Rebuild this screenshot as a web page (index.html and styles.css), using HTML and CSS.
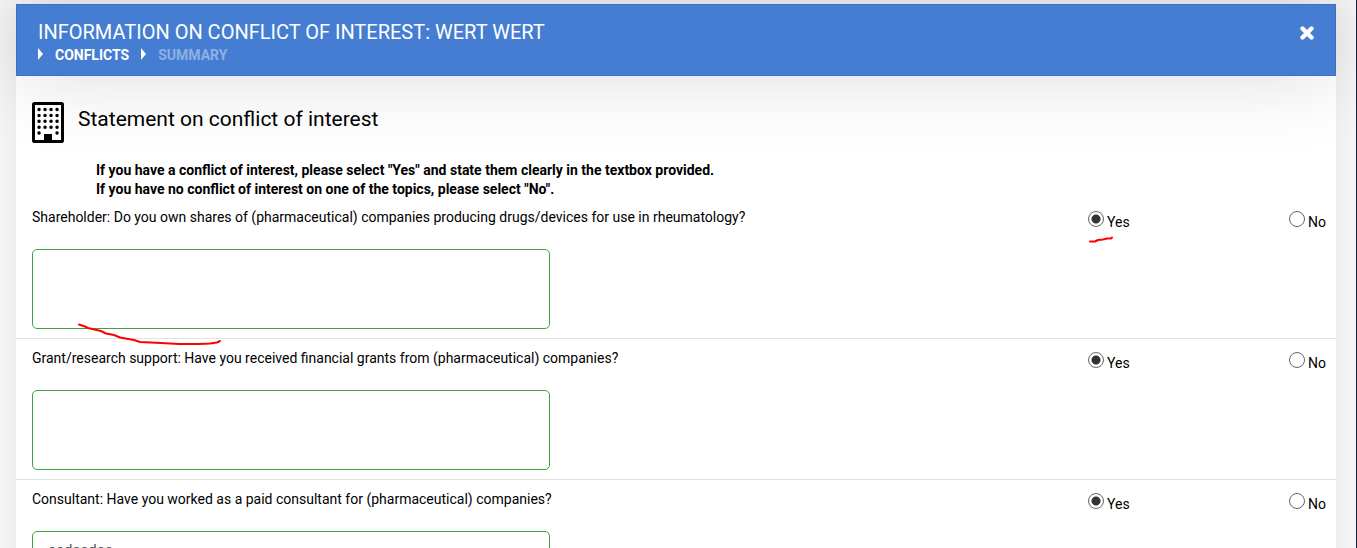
FILE: index.html
```html
<!DOCTYPE html>
<html lang="en">
<head>
    <meta charset="utf-8">
    <title>Information on conflict of interest</title>
    <meta name="viewport" content="width=device-width, initial-scale=1.0">
    <link rel="stylesheet" href="styles.css">
</head>

<body>
    <div class="modal">
        <header class="modal-header">
            <div class="modal-heading">
                <h1>INFORMATION ON CONFLICT OF INTEREST: WERT WERT</h1>
                <nav class="steps">
                    <a href="#" class="step active">CONFLICTS</a>
                    <a href="#" class="step">SUMMARY</a>
                </nav>
            </div>
            <button type="button" class="close" aria-label="Close">
                <svg width="14" height="14" viewBox="0 0 14 14">
                    <path d="M2.5 2.5 L11.5 11.5 M11.5 2.5 L2.5 11.5" stroke="#fff" stroke-width="4.4" stroke-linecap="round"/>
                </svg>
            </button>
        </header>

        <form class="modal-body">
            <div class="section-title">
                <svg class="building" width="32" height="41" viewBox="0 0 32 41">
                    <rect x="1.5" y="1.5" width="29" height="38" rx="1" fill="#fff" stroke="#000" stroke-width="3"/>
                    <path d="M7 7.500h19M7 13.500h19M7 19.200h19M7 25.200h19M7 31h1M25 31h1" stroke="#000" stroke-width="3.400" stroke-linecap="round" stroke-dasharray="0.100 5.900"/>
                    <rect x="12" y="32" width="8" height="8"/>
                </svg>
                <h2>Statement on conflict of interest</h2>
            </div>

            <p class="hint">
                If you have a conflict of interest, please select "Yes" and state them clearly in the textbox provided.<br>
                If you have no conflict of interest on one of the topics, please select "No".
            </p>

            <section class="question">
                <div class="question-head">
                    <label for="shareholder">Shareholder: Do you own shares of (pharmaceutical) companies producing drugs/devices for use in rheumatology?</label>
                    <div class="options">
                        <label class="option"><input type="radio" name="shareholder-answer" checked><span>Yes</span></label>
                        <label class="option"><input type="radio" name="shareholder-answer"><span>No</span></label>
                        <svg class="mark mark-yes" width="26" height="8" viewBox="0 0 26 8">
                            <path d="M2 5.500L7 5.500L10 4L15 3.500L19 2.500L23 2.500L24 1.500"/>
                        </svg>
                    </div>
                </div>
                <div class="answer">
                    <textarea id="shareholder"></textarea>
                    <svg class="mark mark-text" width="146" height="24" viewBox="0 0 146 24">
                        <path d="M2 2.500L8 4.500L11 6L24 9L29 11.500L37 13L43 15.500L57 18L63 20L84 21L102 22L122 22L133 21.500L140 20.500L143 19"/>
                    </svg>
                </div>
            </section>

            <section class="question">
                <div class="question-head">
                    <label for="grant">Grant/research support: Have you received financial grants from (pharmaceutical) companies?</label>
                    <div class="options">
                        <label class="option"><input type="radio" name="grant-answer" checked><span>Yes</span></label>
                        <label class="option"><input type="radio" name="grant-answer"><span>No</span></label>
                    </div>
                </div>
                <div class="answer">
                    <textarea id="grant"></textarea>
                </div>
            </section>

            <section class="question">
                <div class="question-head">
                    <label for="consultant">Consultant: Have you worked as a paid consultant for (pharmaceutical) companies?</label>
                    <div class="options">
                        <label class="option"><input type="radio" name="consultant-answer" checked><span>Yes</span></label>
                        <label class="option"><input type="radio" name="consultant-answer"><span>No</span></label>
                    </div>
                </div>
                <div class="answer">
                    <textarea id="consultant">asdasdas</textarea>
                </div>
            </section>
        </form>
    </div>
</body>
</html>
```

FILE: styles.css
```css
* {
    box-sizing: border-box;
}

body {
    margin: 0;
    height: 100vh;
    padding: 4px 20px 0 16px;
    overflow: hidden;
    background: #f6f6f6;
    border-right: 1px solid #14233a;
    font-family: Roboto, sans-serif;
    font-size: 14px;
    line-height: 20px;
    color: #000;
}

.modal {
    background: #fff;
    box-shadow: 0 0 30px rgba(0, 0, 0, 0.06);
}

.modal-header {
    display: flex;
    justify-content: space-between;
    align-items: flex-start;
    height: 72px;
    padding: 15px 21px 0 21px;
    background: #447dd1;
    border: 1px solid #3a72c8;
    box-shadow: 0 0 80px rgba(0, 0, 0, 0.15);
    color: #fff;
}

h1,
h2 {
    margin: 0;
    font-size: 21px;
    font-weight: 400;
    line-height: 24px;
}

h1 {
    font-size: 20px;
}

.steps {
    display: flex;
    gap: 12px;
    margin-top: 1px;
}

.step {
    display: flex;
    gap: 12px;
    color: #8fb1e3;
    font-weight: 700;
    text-decoration: none;
}

.step::before {
    content: "";
    align-self: flex-start;
    margin-top: 3px;
    border: 6px solid transparent;
    border-left: 5px solid #fff;
    border-right: 0;
}

.step.active {
    color: #fff;
}

.close {
    display: flex;
    margin-top: 6px;
    padding: 0;
    border: 0;
    background: none;
    cursor: pointer;
}

.modal-body {
    padding-top: 26px;
}

.section-title {
    display: flex;
    gap: 14px;
    padding-left: 16px;
}

.section-title h2 {
    padding-top: 5px;
}

.hint {
    margin: 18px 0 0;
    padding-left: 80px;
    font-weight: 700;
    line-height: 19px;
}

.question {
    padding: 9px 10px 9px 16px;
    border-bottom: 1px solid #e3e3e3;
}

/* first row sits closer to the hint */
.hint + .question {
    padding-top: 8px;
}

.question-head {
    display: flex;
    justify-content: space-between;
    height: 20px;
}

.options {
    position: relative;
    display: flex;
    justify-content: space-between;
    width: 238px;
    padding-top: 1px;
}

.option {
    display: flex;
    gap: 3px;
}

.option span {
    padding-top: 4px;
}

.option input {
    appearance: none;
    width: 16px;
    height: 16px;
    margin: 3px 0 0;
    border: 1px solid #666;
    border-radius: 50%;
    background: #fff;
}

.option input:checked {
    background: radial-gradient(circle, #333 4px, #fff 5px);
}

.answer {
    position: relative;
    margin-top: 22px;
}

textarea {
    display: block;
    width: 40%;
    height: 80px;
    padding: 8px 15px;
    border: 1px solid #3fa142;
    border-radius: 5px;
    background: #fff;
    color: #555;
    font-family: inherit;
    font-size: 15px;
    line-height: 20px;
    resize: none;
}

/* red pen strokes */
.mark {
    position: absolute;
    fill: none;
    stroke: #f00;
    stroke-width: 2;
    stroke-linecap: round;
    stroke-linejoin: round;
    pointer-events: none;
}

.mark-yes {
    top: 29px;
    left: 0;
}

.mark-text {
    top: 73px;
    left: 45px;
}
```
